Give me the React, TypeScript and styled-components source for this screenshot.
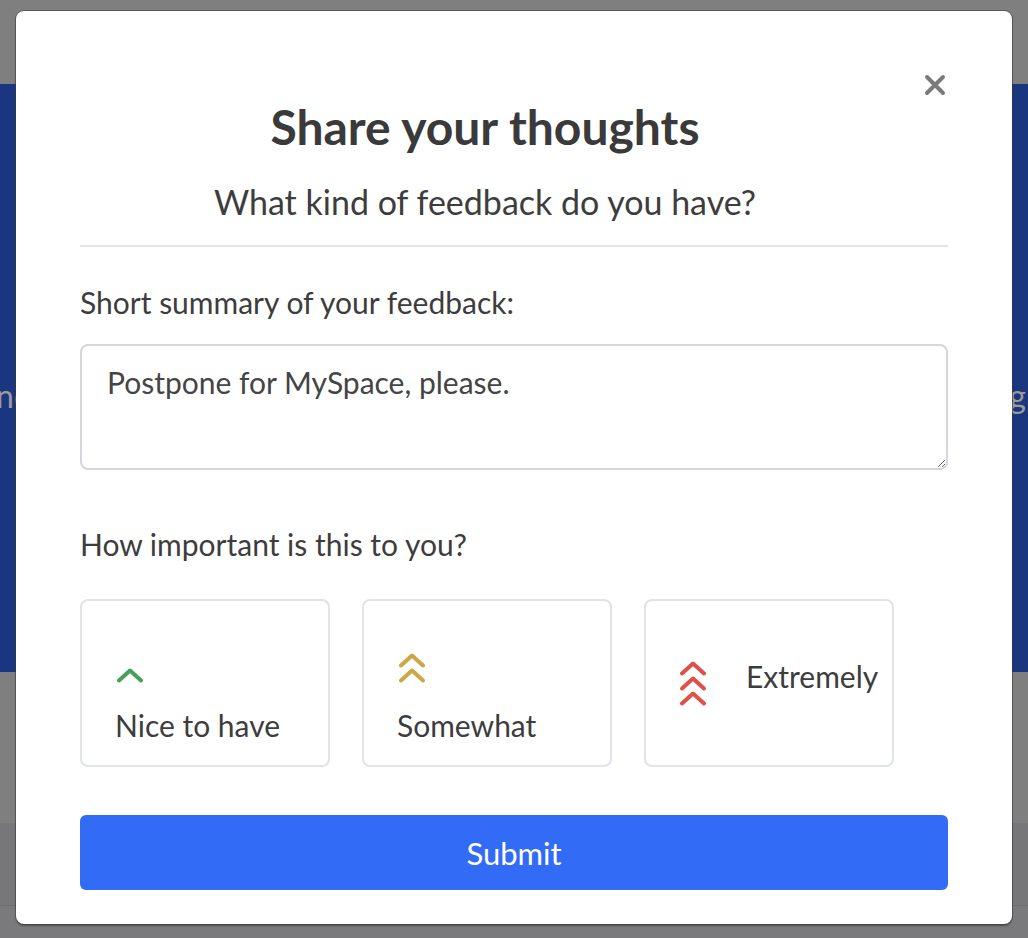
import React from "react";
import styled, { createGlobalStyle } from "styled-components";

const Global = createGlobalStyle`
  html, body { margin: 0; padding: 0; }
  body {
    font-family: Lato, "Open Sans", "Liberation Sans", sans-serif;
    background: #7f7f7f;
    overflow: hidden;
  }
  * { box-sizing: border-box; }
`;

const Page = styled.div`
  position: relative;
  width: 1028px;
  height: 938px;
  display: flex;
  flex-direction: column;
  overflow: hidden;
`;

const Band = styled.div<{ $h: number; $bg: string; $line?: boolean }>`
  height: ${(p) => p.$h}px;
  flex: none;
  background: ${(p) => p.$bg};
  border-top: ${(p) => (p.$line ? "1px solid #6d6d70" : "none")};
`;

const Banner = styled.div`
  height: 588px;
  flex: none;
  background: #1a367e;
  display: flex;
  align-items: center;
  justify-content: space-between;
  overflow: hidden;
  padding-top: 34px;
`;

const BannerWord = styled.span<{ $shift: number }>`
  font-size: 32px;
  color: #9a9a9a;
  margin-left: ${(p) => p.$shift}px;
  margin-right: ${(p) => -p.$shift}px;
`;

const Modal = styled.div`
  position: absolute;
  left: 16px;
  top: 11px;
  width: 996px;
  height: 913px;
  background: #fff;
  border-radius: 8px;
  box-shadow: 0 0 0 1px rgba(60, 60, 60, 0.55), 0 2px 2px rgba(0, 0, 0, 0.35);
  padding: 0 64px;
  display: flex;
  flex-direction: column;
  color: #3d3d3d;
`;

const Close = styled.button`
  position: absolute;
  top: 63px;
  right: 66px;
  width: 22px;
  height: 22px;
  padding: 0;
  border: none;
  background: none;
  cursor: pointer;
  display: flex;
`;

const Header = styled.div`
  display: flex;
  flex-direction: column;
  align-items: center;
  padding-right: 58px;
  border-bottom: 2px solid #e2e4e7;
  padding-bottom: 23px;
`;

const Title = styled.h1`
  margin: 88px 0 0;
  font-size: 48px;
  line-height: 56px;
  font-weight: 700;
  color: #3a3a3a;
`;

const Subtitle = styled.p`
  margin: 27px 0 0;
  font-size: 34px;
  line-height: 40px;
  color: #3d3d3d;
`;

const Label = styled.label<{ $top: number }>`
  display: block;
  margin-top: ${(p) => p.$top}px;
  font-size: 30px;
  line-height: 36px;
  color: #3d3d3d;
`;

const TextArea = styled.textarea`
  margin-top: 24px;
  width: 100%;
  height: 126px;
  flex: none;
  border: 2px solid #d3d6da;
  border-radius: 8px;
  padding: 18px 25px;
  font-family: inherit;
  font-size: 30px;
  line-height: 36px;
  color: #454545;
  outline: none;
`;

const Cards = styled.div`
  margin-top: 37px;
  display: flex;
  gap: 32px;
`;

const Card = styled.button<{ $row?: boolean }>`
  width: 250px;
  height: 168px;
  border: 2px solid #e0e3e7;
  border-radius: 8px;
  background: #fff;
  font-family: inherit;
  color: #3d3d3d;
  display: flex;
  cursor: pointer;
  padding: ${(p) => (p.$row ? "0 12px 0 32px" : "0 12px 22px 33px")};
  flex-direction: ${(p) => (p.$row ? "row" : "column")};
  justify-content: ${(p) => (p.$row ? "flex-start" : "flex-end")};
  align-items: ${(p) => (p.$row ? "center" : "flex-start")};
  gap: ${(p) => (p.$row ? "38px" : "24px")};
`;

const CardText = styled.span<{ $raise?: boolean }>`
  font-size: 30px;
  line-height: 36px;
  white-space: nowrap;
  margin-bottom: ${(p) => (p.$raise ? "14px" : "0")};
`;

const Submit = styled.button`
  margin-top: 48px;
  width: 100%;
  height: 75px;
  flex: none;
  border: none;
  border-radius: 6px;
  background: #326cf6;
  color: #fff;
  font-family: inherit;
  font-size: 31px;
  cursor: pointer;
`;

const Chevrons = ({ count, color }: { count: number; color: string }) => {
  const step = 15;
  const w = 30;
  const h = 15 + (count - 1) * step;
  return (
    <svg width={w} height={h} viewBox={`0 0 ${w} ${h}`} fill="none">
      {Array.from({ length: count }).map((_, i) => (
        <path
          key={i}
          d={`M4 ${12.5 + i * step} L15 ${2.5 + i * step} L26 ${12.5 + i * step}`}
          stroke={color}
          strokeWidth={4}
          strokeLinecap="round"
          strokeLinejoin="round"
        />
      ))}
    </svg>
  );
};

export default function App() {
  return (
    <>
      <Global />
      <Page>
        <Band $h={84} $bg="#7f7f7f" />
        <Banner>
          <BannerWord $shift={-4}>ne</BannerWord>
          <BannerWord $shift={-2}>g</BannerWord>
        </Banner>
        <Band $h={151} $bg="#7f7f7f" />
        <Band $h={82} $bg="#77777a" />
        <Band $h={40} $bg="#7a7a7c" $line />
        <Modal role="dialog">
          <Close aria-label="Close">
            <svg width="22" height="22" viewBox="0 0 22 22">
              <path d="M3 3 L19 19 M19 3 L3 19" stroke="#7b7b7b" strokeWidth="4" strokeLinecap="round" />
            </svg>
          </Close>
          <Header>
            <Title>Share your thoughts</Title>
            <Subtitle>What kind of feedback do you have?</Subtitle>
          </Header>
          <Label $top={37}>Short summary of your feedback:</Label>
          <TextArea defaultValue="Postpone for MySpace, please." />
          <Label $top={56}>How important is this to you?</Label>
          <Cards>
            <Card>
              <Chevrons count={1} color="#46a05a" />
              <CardText>Nice to have</CardText>
            </Card>
            <Card>
              <Chevrons count={2} color="#cca844" />
              <CardText>Somewhat</CardText>
            </Card>
            <Card $row>
              <Chevrons count={3} color="#e0504a" />
              <CardText $raise>Extremely</CardText>
            </Card>
          </Cards>
          <Submit>Submit</Submit>
        </Modal>
      </Page>
    </>
  );
}
